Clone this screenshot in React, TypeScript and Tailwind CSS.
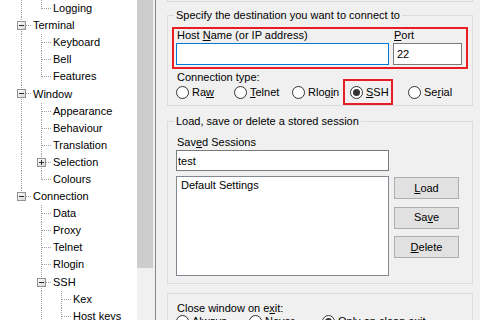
import React from 'react';

interface TreeItem {
  label: string;
  level: number;
  guides: boolean[]; // ancestor columns whose line keeps going
  last: boolean;
  box?: 'minus' | 'plus';
}

const treeItems: TreeItem[] = [
  { label: 'Logging', level: 1, guides: [true], last: true },
  { label: 'Terminal', level: 0, guides: [], last: false, box: 'minus' },
  { label: 'Keyboard', level: 1, guides: [true], last: false },
  { label: 'Bell', level: 1, guides: [true], last: false },
  { label: 'Features', level: 1, guides: [true], last: true },
  { label: 'Window', level: 0, guides: [], last: false, box: 'minus' },
  { label: 'Appearance', level: 1, guides: [true], last: false },
  { label: 'Behaviour', level: 1, guides: [true], last: false },
  { label: 'Translation', level: 1, guides: [true], last: false },
  { label: 'Selection', level: 1, guides: [true], last: false, box: 'plus' },
  { label: 'Colours', level: 1, guides: [true], last: true },
  { label: 'Connection', level: 0, guides: [], last: true, box: 'minus' },
  { label: 'Data', level: 1, guides: [false], last: false },
  { label: 'Proxy', level: 1, guides: [false], last: false },
  { label: 'Telnet', level: 1, guides: [false], last: false },
  { label: 'Rlogin', level: 1, guides: [false], last: false },
  { label: 'SSH', level: 1, guides: [false], last: false, box: 'minus' },
  { label: 'Kex', level: 2, guides: [false, true], last: false },
  { label: 'Host keys', level: 2, guides: [false, true], last: false },
];

const ROW_H = 17.1;
const MID = 8.5;

const TreeLines = ({ item }: { item: TreeItem }) => {
  const w = (item.level + 1) * 20;
  const cx = item.level * 20 + 10.5;
  const dot = { stroke: '#a0a0a0', strokeDasharray: '1 1', strokeWidth: 1 };
  return (
    <svg width={w} height={ROW_H} className="shrink-0" shapeRendering="crispEdges">
      {item.guides.map((g, i) =>
        g ? <line key={i} x1={i * 20 + 10.5} y1={0} x2={i * 20 + 10.5} y2={ROW_H} {...dot} /> : null
      )}
      <line x1={cx} y1={0} x2={cx} y2={item.last ? MID : ROW_H} {...dot} />
      <line x1={cx} y1={MID} x2={w} y2={MID} {...dot} />
      {item.box && (
        <g>
          <defs>
            <linearGradient id="boxfill" x1="0" y1="0" x2="1" y2="1">
              <stop offset="0" stopColor="#ffffff" />
              <stop offset="1" stopColor="#d4d4d4" />
            </linearGradient>
          </defs>
          <rect x={cx - 4} y={MID - 4} width={8} height={8} fill="url(#boxfill)" stroke="#919191" />
          <line x1={cx - 2.5} y1={MID} x2={cx + 2.5} y2={MID} stroke="#2b2b2b" />
          {item.box === 'plus' && <line x1={cx} y1={MID - 2.5} x2={cx} y2={MID + 2.5} stroke="#2b2b2b" />}
        </g>
      )}
    </svg>
  );
};

const Radio = ({ checked, children }: { checked?: boolean; children: React.ReactNode }) => (
  <span className="flex items-center gap-[3px] h-[13px]">
    <span className="w-[13px] h-[13px] rounded-full border border-[#333333] bg-white flex items-center justify-center shrink-0">
      {checked && <span className="w-[7px] h-[7px] rounded-full bg-[#333333]" />}
    </span>
    <span className="whitespace-nowrap">{children}</span>
  </span>
);

const Button = ({ children }: { children: React.ReactNode }) => (
  <button className="w-[65px] h-[22px] bg-[#e1e1e1] border border-[#adadad] flex items-center justify-center leading-[13px]">
    {children}
  </button>
);

export default function App() {
  return (
    <div className="w-[480px] h-[320px] overflow-hidden flex bg-[#f0f0f0] text-black text-[11px] leading-[13px] font-['Liberation_Sans',Arial,sans-serif]">
      {/* category tree */}
      <div className="flex shrink-0 h-full border-r border-[#828790]">
        <div className="w-[137px] h-full bg-white pl-[11px] overflow-hidden">
          {treeItems.map((item) => (
            <div key={item.label} className="flex items-center h-[17.1px]">
              <TreeLines item={item} />
              <span className="ml-[2px] whitespace-nowrap">{item.label}</span>
            </div>
          ))}
        </div>
        <div className="w-[18px] h-full bg-[#f0f0f0]">
          <div className="w-[16px] h-[268px] bg-[#cdcdcd]" />
        </div>
      </div>

      {/* session panel */}
      <div className="flex-1 pl-[11px] pr-[8px]">
        <div className="h-[2px] border-x border-b border-[#dcdcdc]" />

        <fieldset className="mt-[6.5px] border border-[#dcdcdc] pb-[6.5px]">
          <legend className="ml-[6px] px-[2px] leading-[13px]">Specify the destination you want to connect to</legend>
          <div className="mx-[4px] mt-[5.5px] border-2 border-[#e81c24] flex gap-[4px] pl-[2px] pb-[2px]">
            <div className="w-[213px]">
              <div className="pl-[1px] leading-[12px]">
                Host <u>N</u>ame (or IP address)
              </div>
              <input readOnly value="" className="mt-[2px] w-full h-[22px] bg-white border border-[#0078d7] outline-none" />
            </div>
            <div className="w-[69px]">
              <div className="pl-[1px] leading-[12px]">
                <u>P</u>ort
              </div>
              <input readOnly value="22" className="mt-[2px] w-full h-[22px] bg-white border border-[#7a7a7a] pl-[3px] outline-none" />
            </div>
          </div>
          <div className="pl-[9px] mt-[1.5px]">Connection type:</div>
          <div className="pl-[8px] mt-[2px] grid grid-cols-[58px_58px_58px_58px_58px]">
            <Radio>Ra<u>w</u></Radio>
            <Radio><u>T</u>elnet</Radio>
            <Radio>Rlog<u>i</u>n</Radio>
            <span className="relative">
              <Radio checked><u>S</u>SH</Radio>
              <span className="absolute left-[-7px] top-[-6.5px] w-[50px] h-[26px] border-2 border-[#e81c24]" />
            </span>
            <Radio>Se<u>r</u>ial</Radio>
          </div>
        </fieldset>

        <fieldset className="mt-[8.5px] border border-[#dcdcdc] pb-[7px]">
          <legend className="ml-[6px] px-[2px] leading-[13px]">Load, save or delete a stored session</legend>
          <div className="pl-[8px]">
            <div className="mt-[8px] pl-[1px]">
              Sav<u>e</u>d Sessions
            </div>
            <div className="flex mt-[1.5px]">
              <div className="w-[213px]">
                <input readOnly value="test" className="w-full h-[21px] bg-white border border-[#7a7a7a] pl-[1px] outline-none" />
                <div className="mt-[5px] h-[100px] bg-white border border-[#828790] pl-[4px] pt-[2px]">
                  Default Settings
                </div>
              </div>
              <div className="ml-[5px] mt-[27px] flex flex-col gap-[7.5px]">
                <Button><u>L</u>oad</Button>
                <Button>Sa<u>v</u>e</Button>
                <Button><u>D</u>elete</Button>
              </div>
            </div>
          </div>
        </fieldset>

        <div className="mt-[9px] border-x border-t border-[#dcdcdc] pl-[8px] pt-[7.5px]">
          <div className="pl-[1px]">
            Close window on e<u>x</u>it:
          </div>
          <div className="mt-[0.5px] grid grid-cols-[73px_73px_150px]">
            <Radio>Al<u>w</u>ays</Radio>
            <Radio><u>N</u>ever</Radio>
            <Radio checked><u>O</u>nly on clean exit</Radio>
          </div>
        </div>
      </div>
    </div>
  );
}
